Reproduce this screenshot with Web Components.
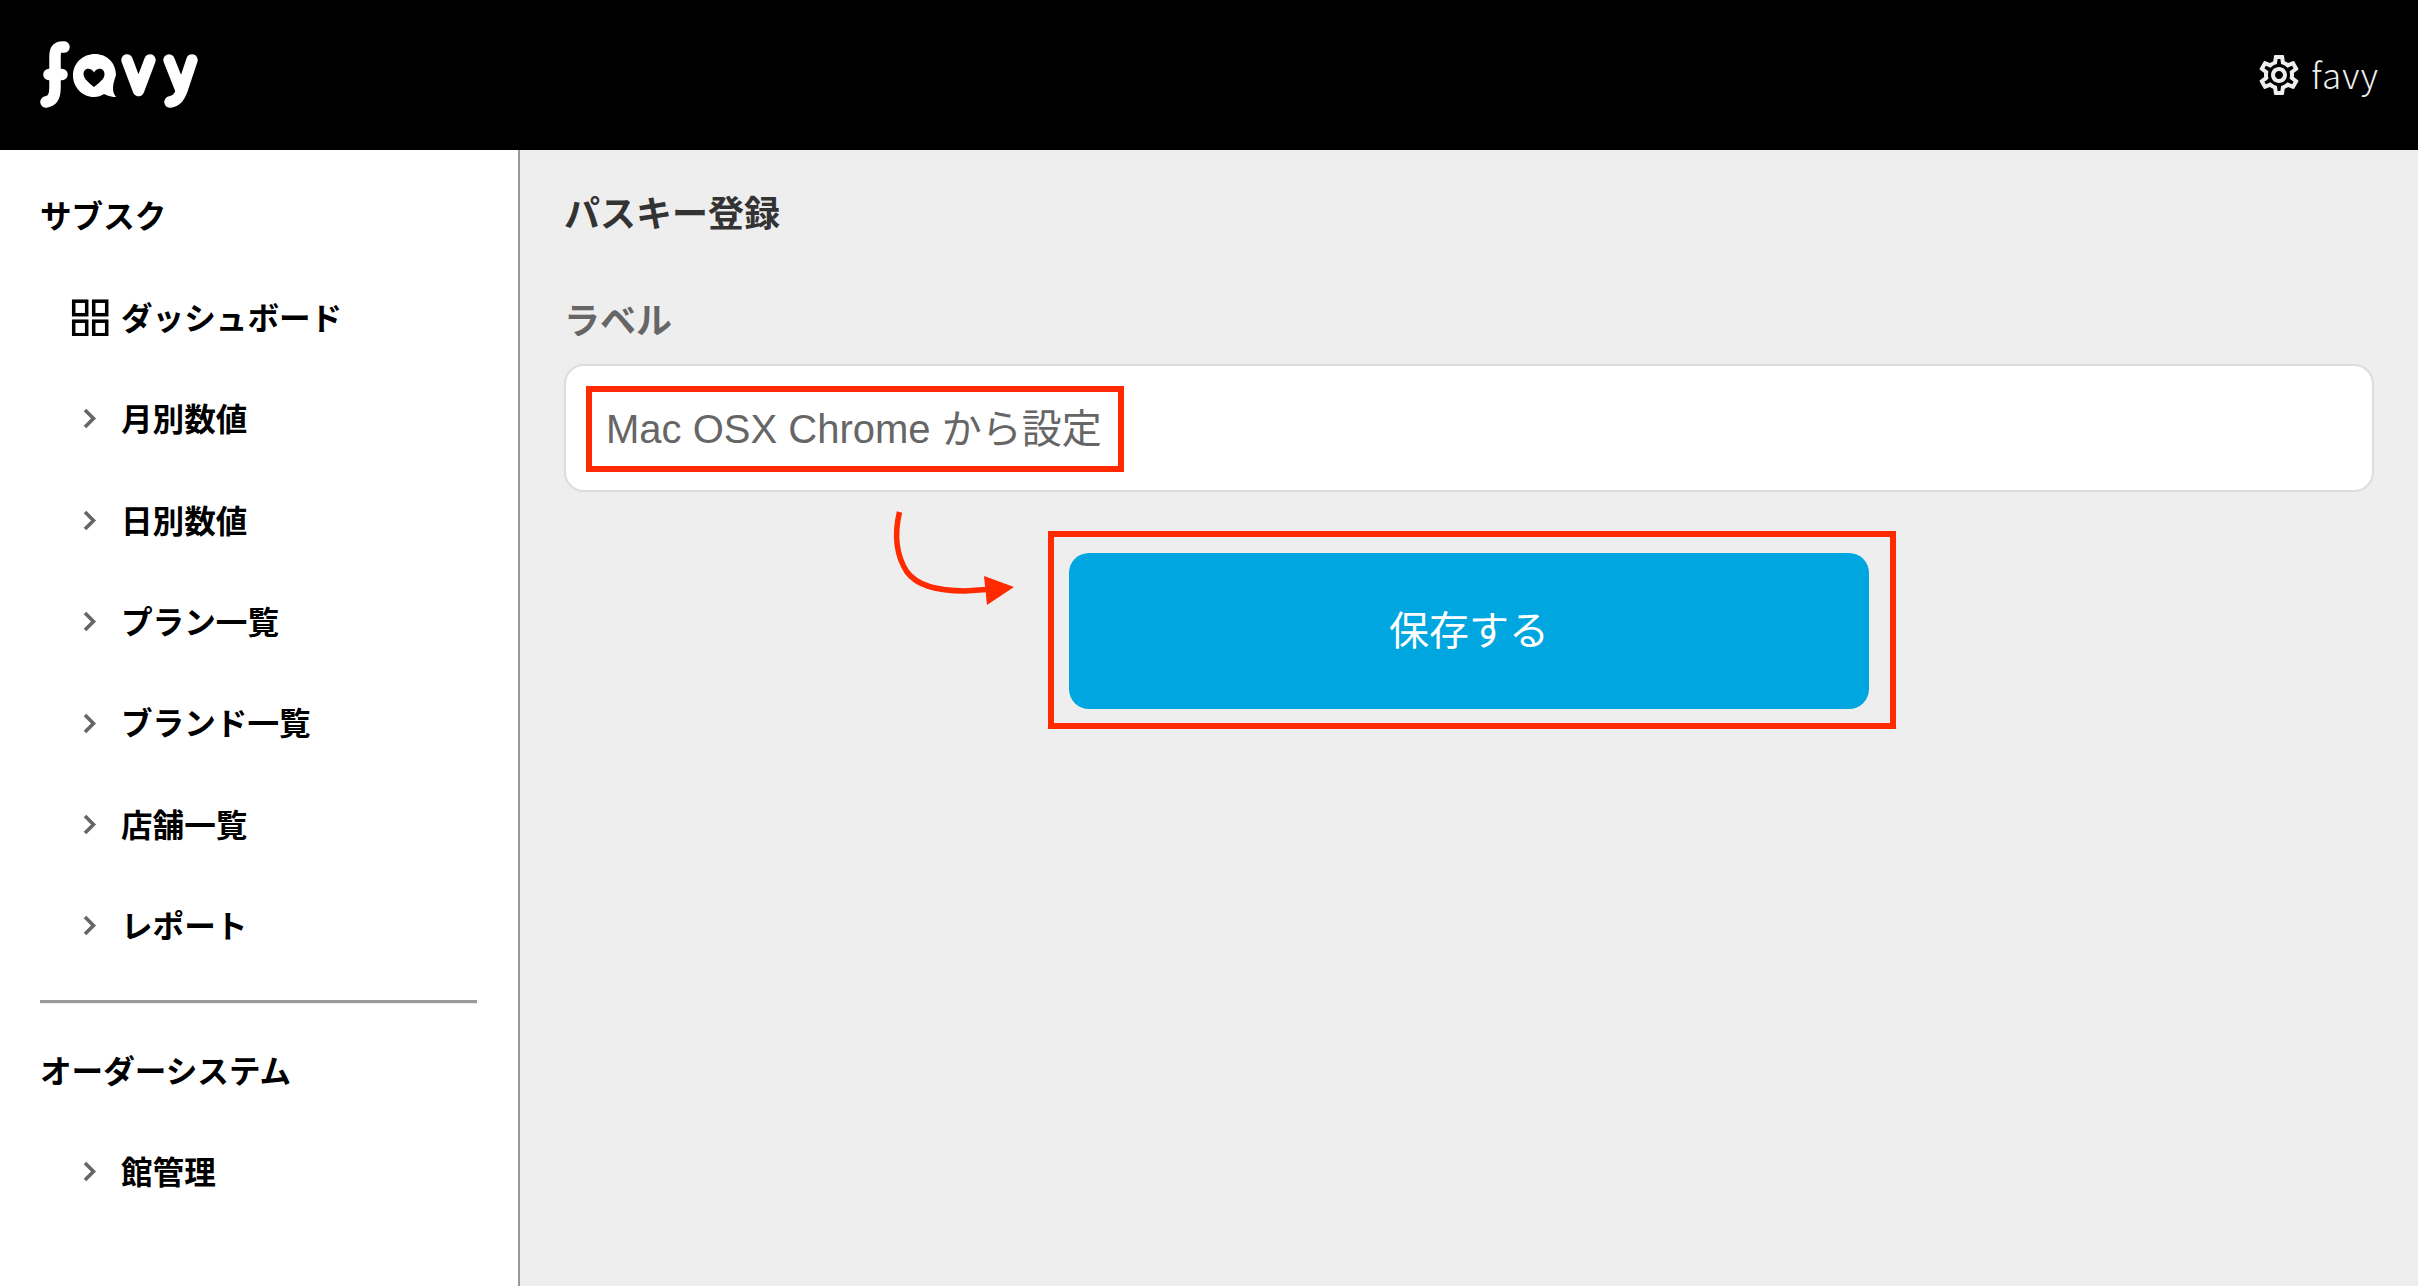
<!DOCTYPE html>
<html lang="ja"><head><meta charset="utf-8"><title>パスキー登録</title>
<style>
html,body{margin:0;height:100%;overflow:hidden}
body{font-family:"Liberation Sans","Noto Sans CJK JP",sans-serif;background:#eee}
</style></head><body>
<app-shell>
  <app-header slot="header"></app-header>
  <side-nav slot="nav">
    <nav-title>サブスク</nav-title>
    <nav-item icon="grid">ダッシュボード</nav-item>
    <nav-item>月別数値</nav-item>
    <nav-item>日別数値</nav-item>
    <nav-item>プラン一覧</nav-item>
    <nav-item>ブランド一覧</nav-item>
    <nav-item>店舗一覧</nav-item>
    <nav-item>レポート</nav-item>
    <nav-divider></nav-divider>
    <nav-title>オーダーシステム</nav-title>
    <nav-item>館管理</nav-item>
  </side-nav>
  <passkey-form></passkey-form>
</app-shell>
<script>
function def(name,html,init){
  customElements.define(name,class extends HTMLElement{
    constructor(){super();this.attachShadow({mode:'open'}).innerHTML=typeof html==='function'?html(this):html;}
    connectedCallback(){if(init)init(this);}
  });
}
def('app-shell',`<style>
:host{display:grid;grid-template-columns:520px 1fr;grid-template-rows:150px 1fr;height:100vh;background:#eee}
.h{grid-column:1/3}
</style><div class="h"><slot name="header"></slot></div><slot name="nav"></slot><slot></slot>`);

def('app-header',`<style>
:host{display:flex;align-items:center;justify-content:space-between;height:150px;background:#000;padding:0 39px 0 40px;box-sizing:border-box}
svg{display:block}
.user{display:flex;align-items:center;gap:8px;color:#eee;font:300 35px/1 "Noto Sans CJK JP","Noto Sans",sans-serif;letter-spacing:1.200px}
.user span{margin-top:-3px}
</style>
<svg width="160" height="70" viewBox="40 40 160 70" role="img" aria-label="favy logo" style="margin-top:-1px">
 <g fill="none" stroke="#fff" stroke-width="11.5" stroke-linecap="round" stroke-linejoin="round">
  <path d="M64 47C58 46.500 55 49 55 56V88C55 97 52 101 46 102"/>
  <path d="M49 74.500H62"/>
  <path d="M127 60L138.500 90.500L150 60"/>
  <path d="M169 60L180.500 89"/>
  <path d="M192 60L182 90C179 98 176 101 170 102"/>
 </g>
 <path fill="#fff" fill-rule="evenodd" d="M95 54C107 54 116 63 116 75C112 86 112 92 116 97C110 97 107 95 104 94C101 96 98 97 94 97C82 97 73 87 73 75.500C73 63 83 54 95 54ZM94 72.500C92 68 84 66.500 83.500 74C83.500 79 90 83.500 94 87C98 83.500 105 79 104.500 74C104 66.500 96 68 94 72.500Z"/>
</svg>
<div class="user"><svg width="48" height="48" viewBox="0 0 24 24" fill="#eee"><path d="M19.43 12.980c.04-.32.07-.64.07-.98 0-.34-.03-.66-.07-.98l2.110-1.650c.19-.15.24-.42.12-.64l-2-3.460c-.09-.16-.26-.25-.44-.25-.06 0-.12.01-.17.03l-2.490 1c-.52-.4-1.080-.73-1.690-.98l-.38-2.650C14.460 2.180 14.250 2 14 2h-4c-.25 0-.46.18-.49.42l-.38 2.650c-.61.25-1.170.59-1.690.98l-2.490-1c-.06-.02-.12-.03-.18-.03-.17 0-.34.09-.43.25l-2 3.460c-.13.22-.07.49.12.64l2.110 1.650c-.04.32-.07.65-.07.98 0 .33.03.66.07.98l-2.110 1.650c-.19.15-.24.42-.12.64l2 3.460c.09.16.26.25.44.25.06 0 .12-.01.17-.03l2.490-1c.52.4 1.080.73 1.690.98l.38 2.650c.03.24.24.42.49.42h4c.25 0 .46-.18.49-.42l.38-2.650c.61-.25 1.170-.59 1.690-.98l2.490 1c.06.02.12.03.18.03.17 0 .34-.09.43-.25l2-3.460c.12-.22.07-.49-.12-.64l-2.110-1.650zm-1.980-1.710c.04.31.05.52.05.73 0 .21-.02.43-.05.73l-.14 1.130.89.7 1.080.84-.7 1.210-1.270-.51-1.040-.42-.9.68c-.43.32-.84.56-1.250.73l-1.060.43-.16 1.130-.2 1.350h-1.400l-.19-1.350-.16-1.130-1.060-.43c-.43-.18-.83-.41-1.230-.71l-.91-.7-1.060.43-1.270.51-.7-1.210 1.080-.84.89-.7-.14-1.130c-.03-.31-.05-.54-.05-.74s.02-.43.05-.73l.14-1.130-.89-.7-1.080-.84.7-1.210 1.270.51 1.040.42.9-.68c.43-.32.84-.56 1.250-.73l1.060-.43.16-1.130.2-1.350h1.390l.19 1.350.16 1.130 1.060.43c.43.18.83.41 1.230.71l.91.7 1.060-.43 1.270-.51.7 1.210-1.070.85-.89.7.14 1.130zM12 8c-2.210 0-4 1.790-4 4s1.790 4 4 4 4-1.790 4-4-1.790-4-4-4zm0 6c-1.100 0-2-.9-2-2s.9-2 2-2 2 .9 2 2-.9 2-2 2z"/></svg><span>favy</span></div>`);

def('side-nav',`<style>
:host{display:block;background:#fff;border-right:2px solid #999;box-sizing:border-box;padding-top:15px;overflow:hidden;color:#000}
</style><slot></slot>`);

def('nav-title',`<style>
:host{display:flex;align-items:center;height:101.400px;padding-left:40px;font:700 31.600px/1 "Noto Sans CJK JP",sans-serif;color:#000}
span{margin-top:-1px}
</style><span><slot></slot></span>`);

def('nav-item',el=>{
  const grid=el.getAttribute('icon')==='grid';
  const icon=grid
   ?`<svg width="38" height="38" viewBox="0 0 38 38" fill="none" stroke="#000" stroke-width="3.500"><rect x="2.700" y="3.200" width="13" height="13.500"/><rect x="22.700" y="3.200" width="13" height="13.500"/><rect x="2.700" y="23.200" width="13" height="13.500"/><rect x="22.700" y="23.200" width="13" height="13.500"/></svg>`
   :`<svg width="38" height="38" viewBox="0 0 38 38" fill="none" stroke="#666" stroke-width="3.600"><path d="M14 11L22.500 19.500L14 28"/></svg>`;
  return `<style>
:host{display:flex;align-items:center;height:101.400px;padding-left:71px;font:700 31.600px/1 "Noto Sans CJK JP",sans-serif;color:#000}
svg{display:block;flex:none;margin-right:12px}
span{margin-top:-1px}
</style>${icon}<span><slot></slot></span>`;
});

def('nav-divider',`<style>
:host{display:block;margin:24px 41px 15px 40px;height:3px;background:#999;border-bottom:1px solid #eee}
</style>`);

def('red-frame',`<style>
:host{display:block;position:absolute;box-sizing:border-box;border:6px solid #ff2a00;pointer-events:none}
</style>`);

def('passkey-form',`<style>
:host{display:block;position:relative;padding:0 44px;min-width:0;overflow:hidden;background:#eee}
h1{margin:0;padding-top:38px;height:46px;font:700 36px/46px "Noto Sans CJK JP",sans-serif;color:#333;box-sizing:content-box}
label{display:block;margin-top:61px;height:46px;font:700 36px/46px "Noto Sans CJK JP",sans-serif;color:#666}
.field{box-sizing:border-box;margin-top:23px;height:128px;background:#fff;border:2px solid #ddd;border-radius:20px;display:flex;align-items:center;padding:2px 0 0 40px;font:40px/1 "Liberation Sans","Noto Sans CJK JP",sans-serif;color:#666}
.btn{display:flex;align-items:center;justify-content:center;width:800px;height:156px;margin:61px auto 0;background:#00a6df;border-radius:20px;color:#fff;font:400 40px/1 "Noto Sans CJK JP",sans-serif}
.btn span{margin-top:-6px}
red-frame.a{left:66px;top:236px;width:538px;height:86px}
red-frame.b{left:528px;top:381px;width:848px;height:198px}
svg.arrow{position:absolute;left:360px;top:350px}
</style>
<h1>パスキー登録</h1>
<label>ラベル</label>
<div class="field">Mac OSX Chrome から設定</div>
<div class="btn"><span>保存する</span></div>
<red-frame class="a"></red-frame>
<red-frame class="b"></red-frame>
<svg class="arrow" width="150" height="120" viewBox="0 0 150 120" fill="none"><path d="M19.500 12C15 31 14 52 27 72C38 87 60 91 85 91L106 89.500" stroke="#ff2a00" stroke-width="5.500"/><path d="M104 76L134 87L107 105Z" fill="#ff2a00"/></svg>`);
</script>
</body></html>
